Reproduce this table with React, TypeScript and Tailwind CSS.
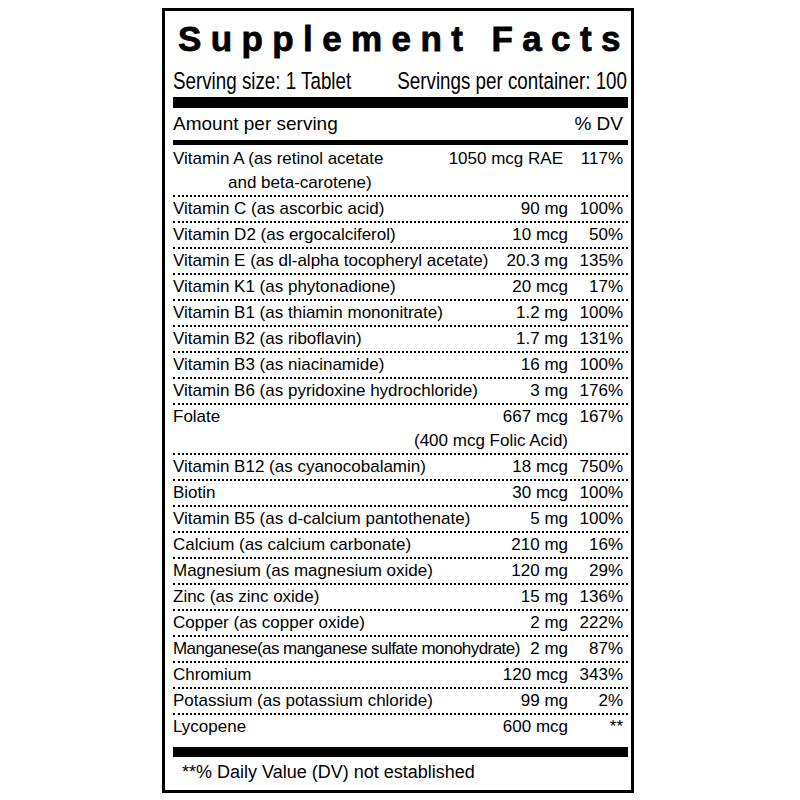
import React from "react";

type Row = {
    name: string;
    amount: string;
    dv: string;
    extra?: string;
    tight?: boolean;
};

const rows: Row[] = [
    { name: "Vitamin C (as ascorbic acid)", amount: "90 mg", dv: "100%" },
    { name: "Vitamin D2 (as ergocalciferol)", amount: "10 mcg", dv: "50%" },
    { name: "Vitamin E (as dl-alpha tocopheryl acetate)", amount: "20.3 mg", dv: "135%" },
    { name: "Vitamin K1 (as phytonadione)", amount: "20 mcg", dv: "17%" },
    { name: "Vitamin B1 (as thiamin mononitrate)", amount: "1.2 mg", dv: "100%" },
    { name: "Vitamin B2 (as riboflavin)", amount: "1.7 mg", dv: "131%" },
    { name: "Vitamin B3 (as niacinamide)", amount: "16 mg", dv: "100%" },
    { name: "Vitamin B6 (as pyridoxine hydrochloride)", amount: "3 mg", dv: "176%" },
    { name: "Folate", amount: "667 mcg", dv: "167%", extra: "(400 mcg Folic Acid)" },
    { name: "Vitamin B12 (as cyanocobalamin)", amount: "18 mcg", dv: "750%" },
    { name: "Biotin", amount: "30 mcg", dv: "100%" },
    { name: "Vitamin B5 (as d-calcium pantothenate)", amount: "5 mg", dv: "100%" },
    { name: "Calcium (as calcium carbonate)", amount: "210 mg", dv: "16%" },
    { name: "Magnesium (as magnesium oxide)", amount: "120 mg", dv: "29%" },
    { name: "Zinc (as zinc oxide)", amount: "15 mg", dv: "136%" },
    { name: "Copper (as copper oxide)", amount: "2 mg", dv: "222%" },
    { name: "Manganese(as manganese sulfate monohydrate)", amount: "2 mg", dv: "87%", tight: true },
    { name: "Chromium", amount: "120 mcg", dv: "343%" },
    { name: "Potassium (as potassium chloride)", amount: "99 mg", dv: "2%" },
    { name: "Lycopene", amount: "600 mcg", dv: "**" },
];

const sans = "font-['Liberation_Sans',Arial,sans-serif]";

export default function App() {
    return (
        <div className={`w-[800px] h-[800px] bg-white text-black pt-[8px] ${sans}`}>
            <div className="ml-[162px] w-[472px] h-[785px] border-[3px] border-black pl-[8px] pr-[3px] flex flex-col">
                {/* title */}
                <h1 className="font-bold text-[35px] leading-[40px] tracking-[9.4px] pl-[5px] pt-[8px] whitespace-nowrap [-webkit-text-stroke:0.8px_black]">
                    Supplement Facts
                </h1>
                <div className="flex justify-between text-[18.8px] leading-[28px] pr-[1px] mt-[8px] scale-y-[1.25]">
                    <span>Serving size: 1 Tablet</span>
                    <span>Servings per container: 100</span>
                </div>
                <div className="h-[11px] bg-black mt-[2px]" />
                <div className="flex justify-between text-[19px] leading-[32px] pr-[5px]">
                    <span>Amount per serving</span>
                    <span>% DV</span>
                </div>
                <div className="h-[5px] bg-black" />

                <div className="text-[17px] leading-[24px]">
                    <div className="flex border-b-2 border-dotted border-black pt-[2px] pr-[5px]">
                        <div className="flex-1">
                            <div>Vitamin A (as retinol acetate</div>
                            <div className="pl-[55px]">and beta-carotene)</div>
                        </div>
                        <span className="pr-[5px]">1050 mcg RAE</span>
                        <span className="w-[55px] text-right">117%</span>
                    </div>
                    {rows.map((r, i) => (
                        <div
                            key={r.name}
                            className={`pr-[5px] ${i < rows.length - 1 ? "border-b-2 border-dotted border-black" : ""}`}
                        >
                            <div className="flex">
                                <span className={`flex-1 whitespace-nowrap ${r.tight ? "tracking-[-0.55px]" : ""}`}>{r.name}</span>
                                <span className="whitespace-nowrap pl-1">{r.amount}</span>
                                <span className="w-[55px] text-right">{r.dv}</span>
                            </div>
                            {r.extra && (
                                <div className="flex justify-end">
                                    <span>{r.extra}</span>
                                    <span className="w-[55px]" />
                                </div>
                            )}
                        </div>
                    ))}
                </div>

                <div className="h-[10px] bg-black mt-[8px]" />
                <p className="text-[18px] leading-[24px] pl-[9px] mt-[3px]">**% Daily Value (DV) not established</p>
            </div>
        </div>
    );
}
